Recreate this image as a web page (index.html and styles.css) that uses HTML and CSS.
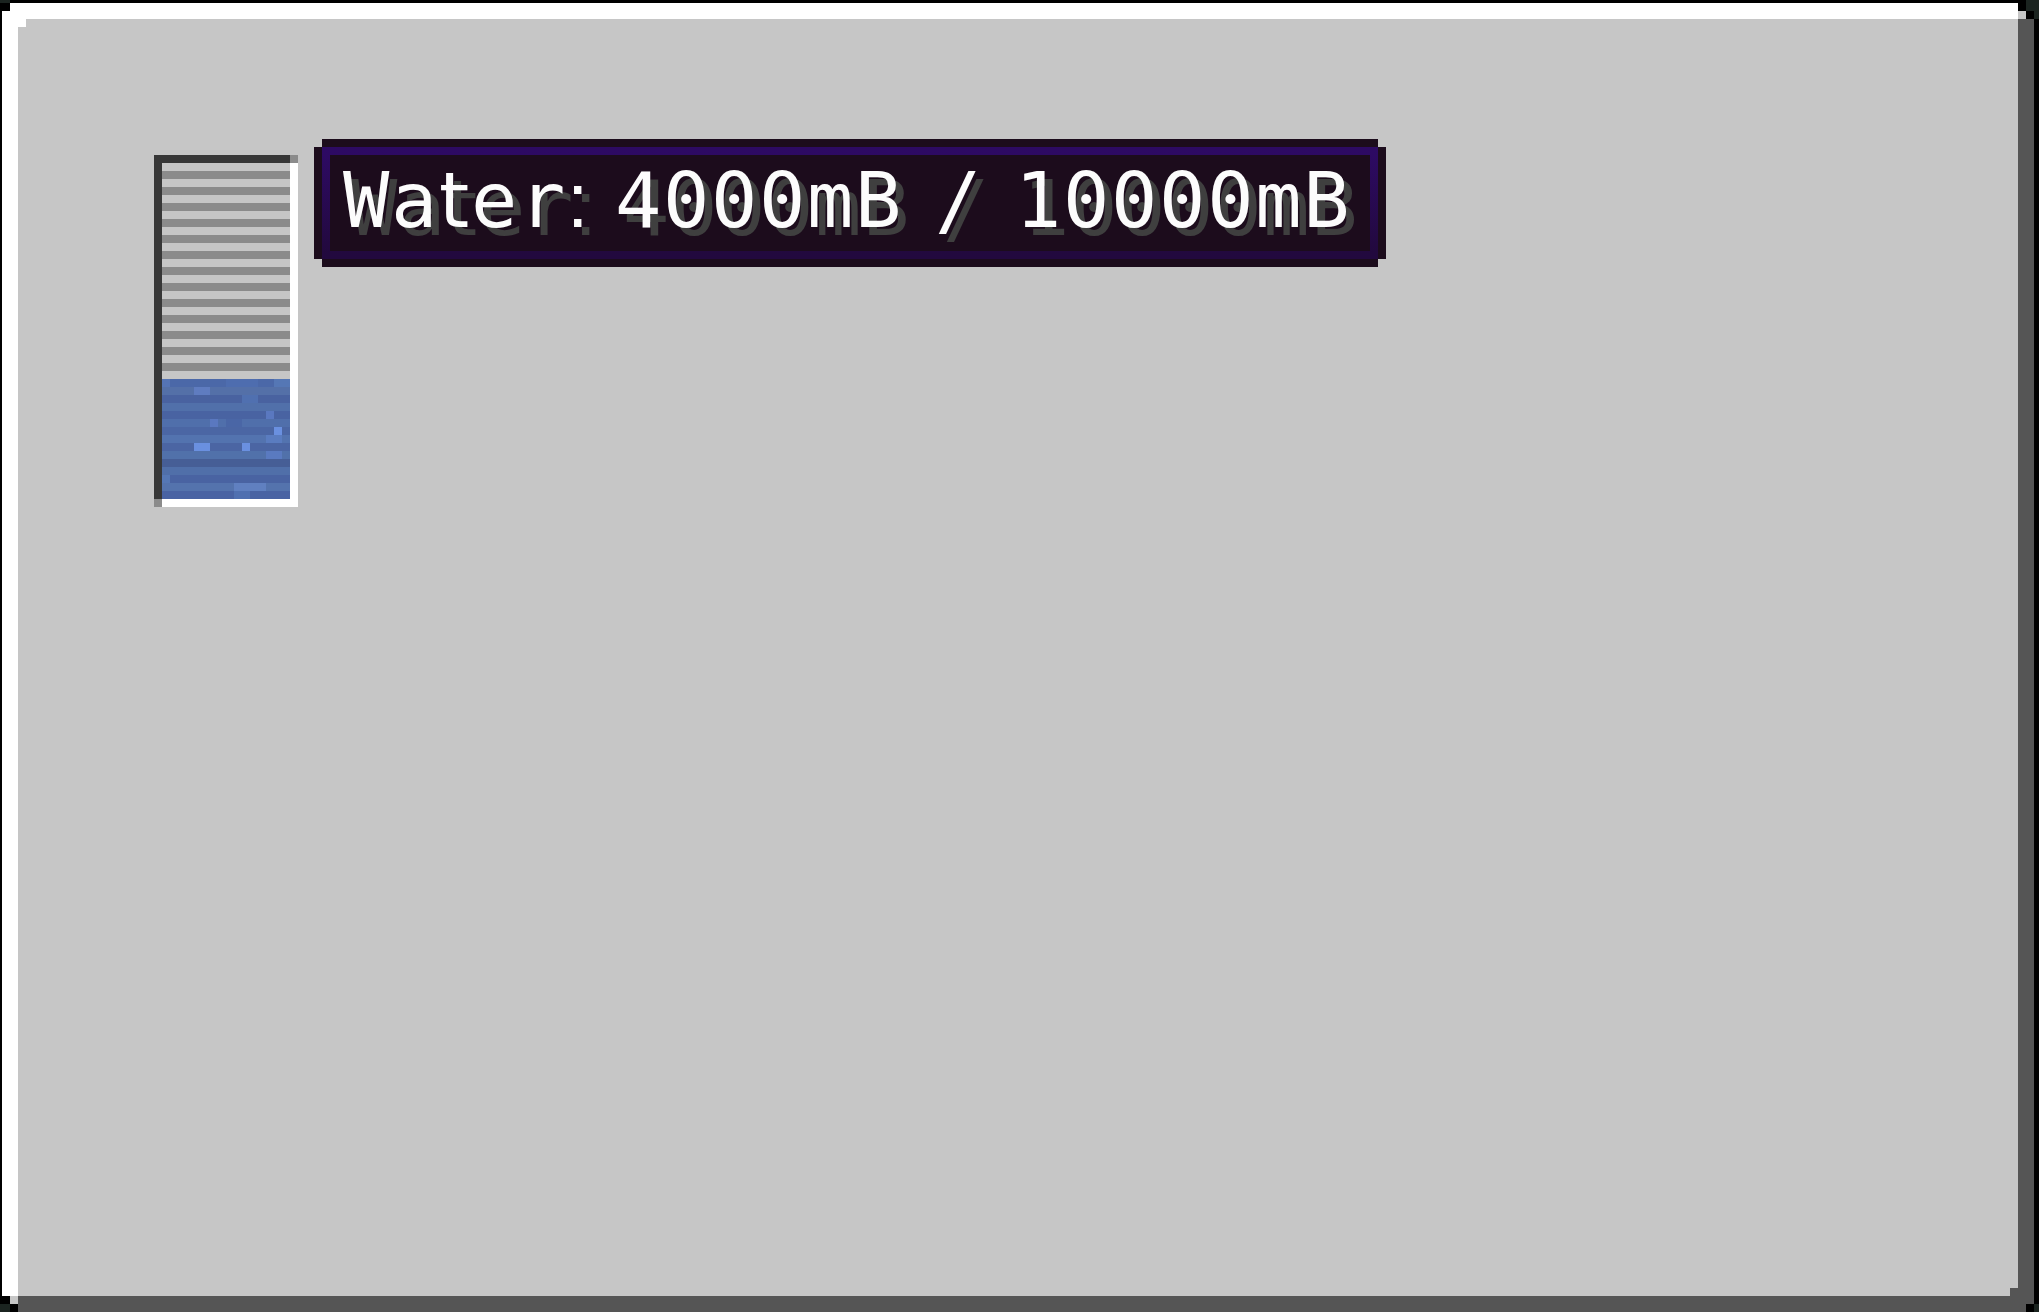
FILE: index.html
```
<!DOCTYPE html>
<html>
<head>
<meta charset="utf-8">
<link rel="stylesheet" href="styles.css">
</head>
<body>
<div class="gui">
  <div class="content">
    <div class="tank">
      <div class="gauge"></div>
      <svg class="water" viewBox="0 0 16 15" shape-rendering="crispEdges" aria-hidden="true">
        <rect x="0" y="0" width="16" height="1" fill="#4b68a8"/>
        <rect x="0" y="0" width="1" height="1" fill="#5574b5"/>
        <rect x="8" y="0" width="4" height="1" fill="#4e6daf"/>
        <rect x="14" y="0" width="2" height="1" fill="#5577b5"/>
        <rect x="0" y="1" width="16" height="1" fill="#5470a8"/>
        <rect x="4" y="1" width="2" height="1" fill="#5f7cc0"/>
        <rect x="0" y="2" width="16" height="1" fill="#4962a0"/>
        <rect x="10" y="2" width="2" height="1" fill="#5070b0"/>
        <rect x="0" y="3" width="16" height="1" fill="#5170aa"/>
        <rect x="0" y="4" width="16" height="1" fill="#4963a2"/>
        <rect x="13" y="4" width="1" height="1" fill="#5a78c0"/>
        <rect x="0" y="5" width="16" height="1" fill="#506fab"/>
        <rect x="6" y="5" width="1" height="1" fill="#5a78c0"/>
        <rect x="8" y="5" width="2" height="1" fill="#4a66a6"/>
        <rect x="0" y="6" width="16" height="1" fill="#4b66a4"/>
        <rect x="14" y="6" width="1" height="1" fill="#6a90e0"/>
        <rect x="0" y="7" width="16" height="1" fill="#5373af"/>
        <rect x="13" y="7" width="2" height="1" fill="#5a7cc0"/>
        <rect x="0" y="8" width="16" height="1" fill="#4b65a3"/>
        <rect x="4" y="8" width="2" height="1" fill="#6a90e0"/>
        <rect x="10" y="8" width="1" height="1" fill="#6a90e0"/>
        <rect x="0" y="9" width="16" height="1" fill="#5171aa"/>
        <rect x="13" y="9" width="2" height="1" fill="#5a7ac0"/>
        <rect x="0" y="10" width="16" height="1" fill="#465e96"/>
        <rect x="0" y="11" width="16" height="1" fill="#506fa9"/>
        <rect x="0" y="12" width="16" height="1" fill="#4963a2"/>
        <rect x="0" y="12" width="1" height="1" fill="#5577b5"/>
        <rect x="0" y="13" width="16" height="1" fill="#5473ad"/>
        <rect x="9" y="13" width="4" height="1" fill="#6080c0"/>
        <rect x="0" y="14" width="16" height="1" fill="#4963a3"/>
        <rect x="9" y="14" width="2" height="1" fill="#5070b0"/>
      </svg>
    </div>
    <div class="tooltip">
      <div class="tip-text">Wa<span class="n-t">t</span>er<span class="n-colon">:</span><span class="n-sp"> </span>4000mB<span class="n-sp"> </span>/<span class="n-sp"> </span>10000mB</div>
    </div>
  </div>

  <i class="px teal tl-a"></i>
  <i class="px black tl-b"></i>
  <i class="px white tl-c"></i>

  <i class="px black tr-a"></i>
  <i class="px teal tr-b"></i>
  <i class="px gray tr-c"></i>
  <i class="px black tr-d"></i>
  <i class="px teal tr-e"></i>

  <i class="px black bl-a"></i>
  <i class="px gray bl-b"></i>
  <i class="px teal bl-c"></i>
  <i class="px black bl-d"></i>

  <i class="px dark br-a"></i>
  <i class="px black br-b"></i>
  <i class="px teal br-c"></i>
</div>
</body>
</html>
```

FILE: styles.css
```
html, body {
  margin: 0;
  padding: 0;
  background: #1b2420;
  overflow: hidden;
}

.gui {
  position: relative;
  width: 2039px;
  height: 1312px;
  box-sizing: border-box;
  background: #c6c6c6;
  box-shadow:
    inset 2px 0 0 #000,
    inset 0 3px 0 #000,
    inset -5px 0 0 #000,
    inset 18px 0 0 #fff,
    inset 0 19px 0 #fff,
    inset -21px 0 0 #555555,
    inset 0 -16px 0 #555555;
  padding: 139px 0 0 154px;
}

.content {
  display: flex;
  align-items: flex-start;
}

/* tank */
.tank {
  position: relative;
  margin-top: 16px;
  width: 128px;
  height: 336px;
  border-style: solid;
  border-width: 8px;
  border-color: #373737 #ffffff #ffffff #373737;
  display: flex;
  flex-direction: column;
}
.tank::before,
.tank::after {
  content: "";
  position: absolute;
  width: 8px;
  height: 8px;
  background: #8b8b8b;
}
.tank::before { top: -8px; right: -8px; }
.tank::after { bottom: -8px; left: -8px; }

.gauge {
  height: 216px;
  background: repeating-linear-gradient(#c6c6c6 0 8px, #8b8b8b 8px 16px);
}
.water {
  display: block;
  width: 128px;
  height: 120px;
}

/* tooltip */
.tooltip {
  margin-left: 24px;
  margin-top: 8px;
  width: 1040px;
  height: 96px;
  border: 8px solid;
  border-image: linear-gradient(#2d0a63, #22093e) 1;
  background: #1c0c1c;
  box-shadow:
    0 -8px 0 #1c0c1c,
    0 8px 0 #1c0c1c,
    -8px 0 0 #1c0c1c,
    8px 0 0 #1c0c1c;
}
.tip-text {
  padding: 7px 0 0 13px;
  font-family: "DejaVu Sans Mono", "Liberation Mono", monospace;
  font-size: 77px;
  line-height: 77px;
  letter-spacing: 1.65px;
  white-space: pre;
  color: #fcfcfc;
  text-shadow: 8px 8px 0 #3f3f3f;
}
.n-t {
  font-family: "DejaVu Sans", sans-serif;
  letter-spacing: 1.8px;
}
.n-colon {
  font-family: "Liberation Sans", sans-serif;
  letter-spacing: -5.4px;
}
.n-sp {
  font-family: "DejaVu Sans", sans-serif;
  letter-spacing: 7.5px;
}

/* frame corner pixels */
.px {
  position: absolute;
  display: block;
}
.teal { background: #1b2420; }
.black { background: #000; }
.white { background: #fff; }
.gray { background: #c6c6c6; }
.dark { background: #555555; }

.tl-a { left: 0; top: 0; width: 10px; height: 3px; }
.tl-b { left: 2px; top: 3px; width: 8px; height: 8px; }
.tl-c { left: 18px; top: 19px; width: 8px; height: 8px; }

.tr-a { left: 2018px; top: 0; width: 8px; height: 11px; }
.tr-b { left: 2026px; top: 0; width: 13px; height: 11px; }
.tr-c { left: 2018px; top: 11px; width: 8px; height: 8px; }
.tr-d { left: 2026px; top: 11px; width: 8px; height: 8px; }
.tr-e { left: 2034px; top: 11px; width: 5px; height: 8px; }

.bl-a { left: 0; top: 1296px; width: 10px; height: 8px; }
.bl-b { left: 10px; top: 1296px; width: 8px; height: 8px; }
.bl-c { left: 0; top: 1304px; width: 10px; height: 8px; }
.bl-d { left: 10px; top: 1304px; width: 8px; height: 8px; }

.br-a { left: 2010px; top: 1288px; width: 8px; height: 8px; }
.br-b { left: 2026px; top: 1304px; width: 8px; height: 8px; }
.br-c { left: 2034px; top: 1304px; width: 5px; height: 8px; }
```
